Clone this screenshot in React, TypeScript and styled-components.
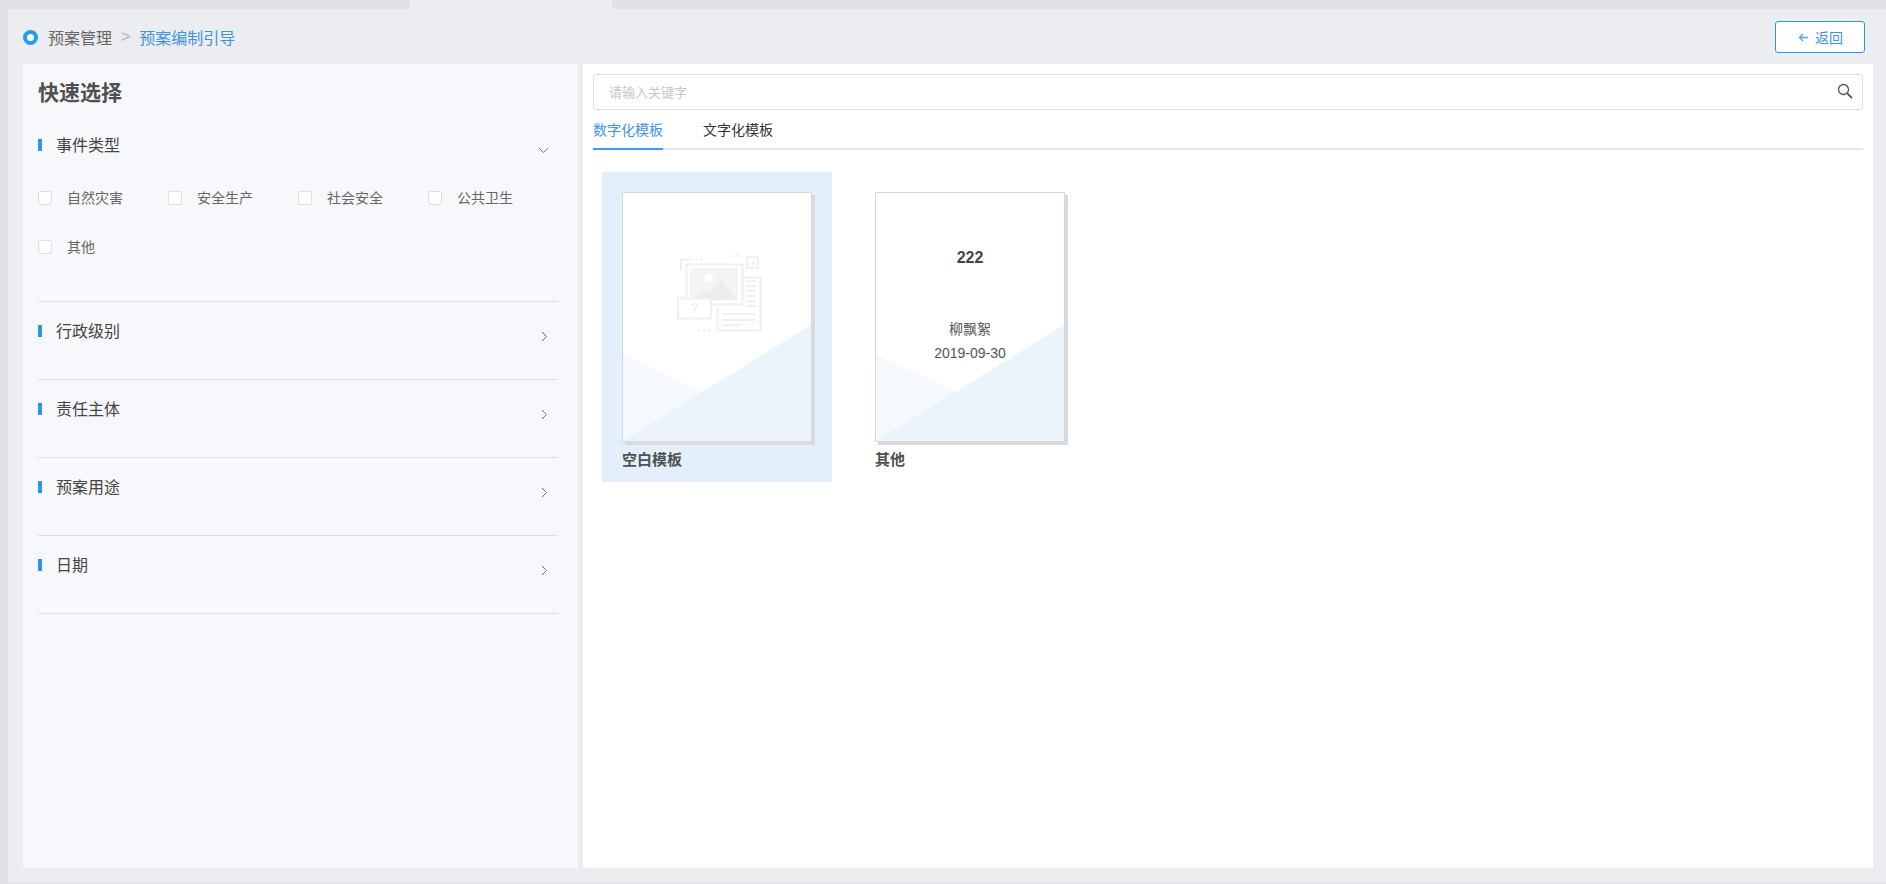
import React from 'react';
import styled, { createGlobalStyle } from 'styled-components';

const GlobalStyle = createGlobalStyle`
  html, body {
    margin: 0;
    padding: 0;
    height: 100%;
    overflow: hidden;
    background: #ecedf1;
    font-family: "Liberation Sans", "Noto Sans CJK SC", sans-serif;
  }
  * { box-sizing: border-box; }
`;

const Page = styled.div`
  width: 1886px;
  height: 884px;
  display: flex;
  flex-direction: column;
  background: #e0e2e6;
`;

const TopStrip = styled.div`
  height: 9px;
  flex: none;
  padding-left: 410px;
`;

const StripTab = styled.div`
  width: 202px;
  height: 9px;
  background: #ecedf1;
`;

const Content = styled.div`
  flex: 1;
  margin-left: 8px;
  margin-bottom: 1px;
  padding: 0 13px 0 15px;
  background: #ecedf1;
  display: flex;
  flex-direction: column;
`;

const Header = styled.div`
  height: 55px;
  flex: none;
  display: flex;
  justify-content: space-between;
  padding-top: 12px;
`;

const Crumbs = styled.div`
  display: flex;
  align-items: center;
  height: 32px;
  font-size: 16px;
  color: #666;
`;

const CrumbDot = styled.span`
  width: 15px;
  height: 15px;
  margin-right: 10px;
  border-radius: 50%;
  border: 4px solid #1f9cf5;
  background: #fff;
`;

const CrumbSep = styled.span`
  margin: 0 9px;
  font-weight: 700;
  color: #c0c2c6;
`;

const CrumbCurrent = styled.span`
  color: #3d94dc;
`;

const BackButton = styled.button`
  width: 90px;
  height: 32px;
  margin-right: 8px;
  display: flex;
  align-items: center;
  justify-content: center;
  gap: 7px;
  border: 1px solid #2f96e4;
  border-radius: 3px;
  background: #fff;
  color: #3d94dc;
  font: inherit;
  font-size: 14px;
  padding: 0 0 0 1px;
`;

const ArrowIcon = styled.svg`
  fill: none;
  stroke: #5aa5e6;
  stroke-width: 1.4;
`;

const Body = styled.div`
  flex: 1;
  display: flex;
  gap: 5px;
  padding-bottom: 15px;
`;

const FilterPanel = styled.aside`
  width: 555px;
  flex: none;
  background: #f7f8fc;
  padding: 15px 20px 0 15px;
`;

const FilterTitle = styled.h2`
  margin: 0 0 8px;
  font-size: 21px;
  line-height: 28px;
  font-weight: 700;
  color: #505050;
`;

const Section = styled.section<{ $open?: boolean }>`
  padding: ${p => (p.$open ? '20px 0 30px' : '19px 0 38px')};
  border-bottom: 1px solid #dcdee2;
`;

const SectionHead = styled.div`
  display: flex;
  align-items: center;
  justify-content: space-between;
  height: 20px;
`;

const SectionLabel = styled.div`
  display: flex;
  align-items: center;
  font-size: 16px;
  color: #444;

  &::before {
    content: '';
    width: 4px;
    height: 12px;
    margin-right: 14px;
    background: #2f96e4;
  }
`;

const SectionName = styled.span`
  margin-bottom: 2px;
`;

const Chevron = styled.svg<{ $inset: number }>`
  margin: 11px ${p => p.$inset}px 0 0;
  fill: none;
  stroke: #777;
  stroke-width: 1;
`;

const CheckGrid = styled.div`
  display: grid;
  grid-template-columns: repeat(4, 130px);
  grid-auto-rows: 49px;
  margin-top: 18px;
`;

const CheckItem = styled.label`
  display: flex;
  align-items: center;
  gap: 15px;
  font-size: 14px;
  color: #666;
`;

const CheckName = styled.span`
  margin-bottom: 2px;
`;

const CheckBox = styled.span`
  width: 14px;
  height: 14px;
  border: 1px solid #dcdfe4;
  border-radius: 2px;
  background: #fff;
`;

const TemplatePanel = styled.main`
  flex: 1;
  background: #fff;
  padding: 10px 10px 0;
`;

const SearchBar = styled.div`
  height: 36px;
  display: flex;
  align-items: center;
  justify-content: space-between;
  padding: 0 9px 0 15px;
  border: 1px solid #dcdfe4;
  border-radius: 3px;
  font-size: 13px;
  color: #c4c6ca;
`;

const SearchHint = styled.span`
  margin-bottom: 2px;
`;

const SearchIcon = styled.svg`
  fill: none;
  stroke: #555;
  margin-bottom: 2px;
`;

const Tabs = styled.div`
  display: flex;
  gap: 40px;
  height: 40px;
  border-bottom: 2px solid #e3e5e8;
`;

const Tab = styled.div<{ $active?: boolean }>`
  height: 40px;
  padding-top: 11px;
  font-size: 14px;
  line-height: 18px;
  color: ${p => (p.$active ? '#3d94f0' : '#333')};
  border-bottom: 2px solid ${p => (p.$active ? '#3d9bf5' : 'transparent')};
`;

const CardRow = styled.div`
  display: flex;
  gap: 23px;
  padding: 22px 0 0 9px;
`;

const Card = styled.div<{ $selected?: boolean }>`
  width: 230px;
  height: 310px;
  padding: 20px 20px 0;
  background: ${p => (p.$selected ? '#e3f0fb' : 'transparent')};
`;

const Paper = styled.div`
  position: relative;
  height: 250px;
  border: 1px solid #d5d8dd;
  background: #fff;
  box-shadow: 3px 3px 0 #d8dadd;
`;

const PaperArt = styled.svg`
  position: absolute;
  left: 0;
  bottom: 0;
`;

const Placeholder = styled.svg`
  position: absolute;
  left: 52px;
  top: 59px;
`;

const PaperText = styled.div`
  position: relative;
  height: 100%;
  text-align: center;
  color: #555;
  font-size: 14px;
  padding-top: 55px;
`;

const PaperName = styled.div`
  font-size: 16px;
  line-height: 20px;
  font-weight: 700;
  color: #444;
  margin-bottom: 49px;
`;

const PaperLine = styled.div`
  line-height: 24px;
`;

const CardLabel = styled.div`
  margin-top: 9px;
  font-size: 15px;
  line-height: 18px;
  font-weight: 700;
  color: #505050;
`;

const Down = () => (
  <Chevron $inset={9} width="11" height="7" viewBox="0 0 11 7">
    <polyline points="1,1 5.5,5.5 10,1" />
  </Chevron>
);

const Right = () => (
  <Chevron $inset={10} width="7" height="11" viewBox="0 0 7 11">
    <polyline points="1,1 5.5,5.5 1,10" />
  </Chevron>
);

const PaperBackground = () => (
  <PaperArt width="188" height="116" viewBox="0 0 188 116">
    <polygon points="0,30 188,116 0,116" fill="#f5f9fe" />
    <polygon points="0,116 188,0 188,116" fill="#ebf3fb" />
  </PaperArt>
);

const EmptyIcon = () => (
  <Placeholder width="90" height="84" viewBox="15 12 90 84" fill="none" stroke="#eef0f3" strokeWidth="2.200">
    <path d="M21 30V19.5H32M35 19.5h2.500M40 19.500h2.500" />
    <rect x="26.500" y="24.500" width="56" height="40" />
    <rect x="30" y="28" width="48" height="32" fill="#f3f4f6" stroke="none" />
    <path d="M34 60l10-11 5 5 12-14 17 20z" fill="#ecedf0" stroke="none" />
    <circle cx="49" cy="38" r="4" fill="#fff" stroke="none" />
    <rect x="75" y="14" width="3" height="3" fill="#eef0f3" stroke="none" />
    <rect x="87" y="17" width="11" height="11" />
    <rect x="91.500" y="21.500" width="3" height="3" fill="#eef0f3" stroke="none" />
    <path d="M84 37.500h16.500V90.500H57.500V68" />
    <path d="M86 41h10M86 46h10M86 51h10M86 56h10M86 61h10M86 66h10M62 74h34M62 80h34M62 85h20" />
    <rect x="18" y="58.500" width="33" height="20" fill="#fff" />
    <text x="34.500" y="73" textAnchor="middle" fontSize="14" fontWeight="700" fill="#eef0f3" stroke="none">?</text>
    <path d="M38 90.500h2.500M43 90.500h2.500M48 90.500h2.500" />
  </Placeholder>
);

const eventTypes = ['自然灾害', '安全生产', '社会安全', '公共卫生', '其他'];
const closedSections = ['行政级别', '责任主体', '预案用途', '日期'];

const App = () => {
  return (
    <Page>
      <GlobalStyle />
      <TopStrip>
        <StripTab />
      </TopStrip>
      <Content>
        <Header>
          <Crumbs>
            <CrumbDot />
            预案管理
            <CrumbSep>&gt;</CrumbSep>
            <CrumbCurrent>预案编制引导</CrumbCurrent>
          </Crumbs>
          <BackButton>
            <ArrowIcon width="10" height="9" viewBox="0 0 10 9">
              <path d="M10 4.500H1.500M5 1L1.500 4.500L5 8" />
            </ArrowIcon>
            返回
          </BackButton>
        </Header>
        <Body>
          <FilterPanel>
            <FilterTitle>快速选择</FilterTitle>
            <Section $open>
              <SectionHead>
                <SectionLabel>
                  <SectionName>事件类型</SectionName>
                </SectionLabel>
                <Down />
              </SectionHead>
              <CheckGrid>
                {eventTypes.map(name => (
                  <CheckItem key={name}>
                    <CheckBox />
                    <CheckName>{name}</CheckName>
                  </CheckItem>
                ))}
              </CheckGrid>
            </Section>
            {closedSections.map(name => (
              <Section key={name}>
                <SectionHead>
                  <SectionLabel>
                    <SectionName>{name}</SectionName>
                  </SectionLabel>
                  <Right />
                </SectionHead>
              </Section>
            ))}
          </FilterPanel>
          <TemplatePanel>
            <SearchBar>
              <SearchHint>请输入关键字</SearchHint>
              <SearchIcon width="16" height="16" viewBox="0 0 16 16">
                <circle cx="6.500" cy="6.500" r="5" strokeWidth="1.300" />
                <path d="M10.300 10.300L15 15" strokeWidth="1.800" />
              </SearchIcon>
            </SearchBar>
            <Tabs>
              <Tab $active>数字化模板</Tab>
              <Tab>文字化模板</Tab>
            </Tabs>
            <CardRow>
              <Card $selected>
                <Paper>
                  <PaperBackground />
                  <EmptyIcon />
                </Paper>
                <CardLabel>空白模板</CardLabel>
              </Card>
              <Card>
                <Paper>
                  <PaperBackground />
                  <PaperText>
                    <PaperName>222</PaperName>
                    <PaperLine>柳飘絮</PaperLine>
                    <PaperLine>2019-09-30</PaperLine>
                  </PaperText>
                </Paper>
                <CardLabel>其他</CardLabel>
              </Card>
            </CardRow>
          </TemplatePanel>
        </Body>
      </Content>
    </Page>
  );
};

export default App;
